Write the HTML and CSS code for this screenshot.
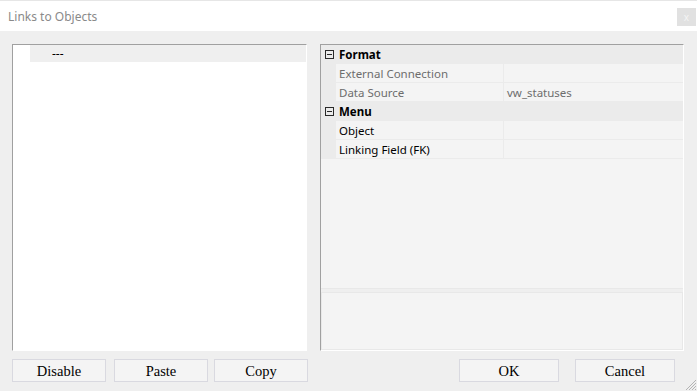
FILE: index.html
```html
<!DOCTYPE html>
<html>
<head>
<meta charset="utf-8">
<link rel="stylesheet" href="styles.css">
</head>
<body>
<div class="window">
  <div class="titlebar">
    <span class="title">Links to Objects</span>
    <span class="close">x</span>
  </div>
  <div class="main">
    <div class="tree">
      <div class="tree-row"><span class="tree-text">---</span></div>
    </div>
    <div class="props">
      <div class="grid">
        <div class="row cat">
          <span class="gutter"><span class="minus"></span></span>
          <span class="cat-name">Format</span>
        </div>
        <div class="row prop">
          <span class="gutter"></span>
          <span class="name dim">External Connection</span>
          <span class="value"></span>
        </div>
        <div class="row prop">
          <span class="gutter"></span>
          <span class="name dim">Data Source</span>
          <span class="value dim">vw_statuses</span>
        </div>
        <div class="row cat">
          <span class="gutter"><span class="minus"></span></span>
          <span class="cat-name">Menu</span>
        </div>
        <div class="row prop">
          <span class="gutter"></span>
          <span class="name">Object</span>
          <span class="value"></span>
        </div>
        <div class="row prop">
          <span class="gutter"></span>
          <span class="name">Linking Field (FK)</span>
          <span class="value"></span>
        </div>
      </div>
      <div class="desc"></div>
    </div>
  </div>
  <div class="buttons">
    <div class="btn-group left">
      <button class="btn">Disable</button>
      <button class="btn paste">Paste</button>
      <button class="btn copy">Copy</button>
    </div>
    <div class="btn-group right">
      <button class="btn wide">OK</button>
      <button class="btn wide cancel">Cancel</button>
    </div>
  </div>
  <svg class="grip" width="12" height="12" viewBox="0 0 12 12">
    <path d="M11 1 L1 11 M11 4 L4 11 M11 7 L7 11 M11 10 L10 11" stroke="#b4b4b4" stroke-width="1" fill="none"/>
  </svg>
</div>
</body>
</html>
```
FILE: styles.css
```css
* { box-sizing: border-box; }
html, body { margin: 0; padding: 0; }
body {
  background: #efefef;
  font-family: "Noto Sans", "Open Sans", sans-serif;
  font-size: 12px;
  width: 697px;
  height: 391px;
  overflow: hidden;
}
.window {
  position: relative;
  width: 697px;
  height: 391px;
}
.titlebar {
  height: 31px;
  background: #fff;
  border-top: 1px solid #e6e6e6;
  display: flex;
  align-items: flex-start;
  padding-left: 8px;
}
.title {
  color: #8a8a8a;
  font-size: 12px;
  margin-top: 7px;
}
.close {
  margin-left: auto;
  margin-right: 1px;
  margin-top: 7px;
  width: 19px;
  height: 18px;
  background: #e1e1e1;
  color: #f4f4f4;
  font-size: 10px;
  display: flex;
  align-items: center;
  justify-content: center;
}
.main {
  display: flex;
  padding: 13px 13px 0 12px;
  gap: 13px;
  height: 320px;
}
.tree {
  width: 295px;
  height: 307px;
  background: #fff;
  border-top: 1px solid #a0a0a0;
  border-left: 1px solid #a0a0a0;
  border-right: 1px solid #fff;
  border-bottom: 1px solid #fff;
}
.tree-row {
  margin-left: 17px;
  height: 17px;
  background: #efefef;
  display: flex;
  align-items: center;
  padding-left: 22px;
}
.tree-text { color: #000; font-size: 12px; }
.props {
  width: 364px;
  height: 307px;
  border-top: 1px solid #a0a0a0;
  border-left: 1px solid #a0a0a0;
  border-right: 1px solid #fff;
  border-bottom: 1px solid #fff;
  display: flex;
  flex-direction: column;
  font-size: 11.5px;
}
.grid {
  height: 244px;
  background: #f4f4f4;
  border-bottom: 1px solid #e8e8e8;
}
.row {
  display: flex;
  height: 19px;
  border-bottom: 1px solid #ebebeb;
}
.row.cat { background: #ebebeb; }
.gutter {
  width: 15px;
  flex: none;
  background: #ebebeb;
  display: flex;
  align-items: center;
  justify-content: center;
}
.minus {
  width: 9px;
  height: 9px;
  border: 1px solid #2a2a2a;
  position: relative;
  margin-left: 1px;
}
.minus::after {
  content: "";
  position: absolute;
  left: 1px;
  right: 1px;
  top: 3px;
  height: 1px;
  background: #2a2a2a;
}
.cat-name {
  font-weight: bold;
  padding-left: 3px;
  padding-top: 1px;
  line-height: 18px;
  color: #000;
}
.name {
  width: 168px;
  flex: none;
  padding-left: 3px;
  padding-top: 1px;
  line-height: 17px;
  color: #000;
  border-right: 1px solid #ebebeb;
}
.value {
  flex: 1;
  padding-left: 3px;
  padding-top: 1px;
  line-height: 17px;
}
.dim { color: #6d6d6d; }
.desc {
  margin-top: 3px;
  flex: 1;
  border: 1px solid #e8e8e8;
  background: #f4f4f4;
}
.buttons {
  display: flex;
  justify-content: space-between;
  padding: 8px 22px 0 12px;
}
.btn-group { display: flex; }
.btn {
  width: 94px;
  height: 23px;
  background: #f4f4f4;
  border: 1px solid #d9d9e0;
  font-family: "Liberation Serif", "Times New Roman", serif;
  font-size: 14.5px;
  color: #000;
  padding: 0;
  margin: 0;
  line-height: 20px;
}
.paste { margin-left: 8px; }
.copy { margin-left: 6px; }
.wide { width: 100px; }
.cancel { margin-left: 16px; }
.grip {
  position: absolute;
  right: 0;
  bottom: 0;
}
```
